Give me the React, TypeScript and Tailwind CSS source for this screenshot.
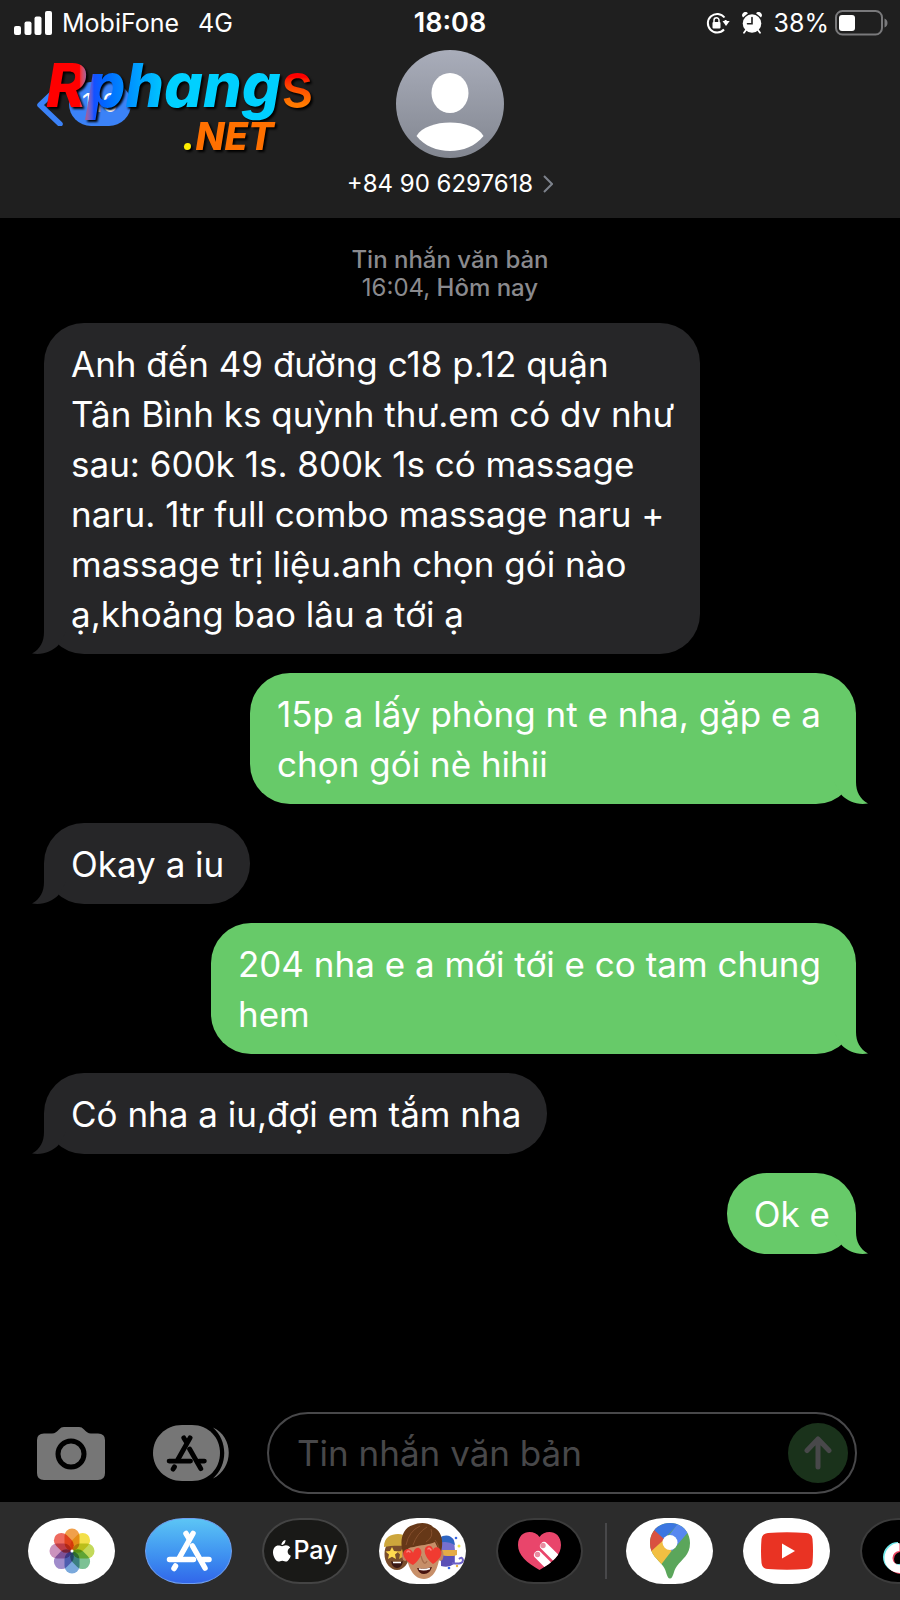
import type { ReactNode } from 'react'

interface Message {
  id: number
  mine: boolean
  lines: string[]
}

const messages: Message[] = [
  {
    id: 1,
    mine: false,
    lines: [
      'Anh đến 49 đường c18 p.12 quận',
      'Tân Bình ks quỳnh thư.em có dv như',
      'sau: 600k 1s. 800k 1s có massage',
      'naru. 1tr full combo massage naru +',
      'massage trị liệu.anh chọn gói nào',
      'ạ,khoảng bao lâu a tới ạ',
    ],
  },
  { id: 2, mine: true, lines: ['15p a lấy phòng nt e nha, gặp e a', 'chọn gói nè hihii'] },
  { id: 3, mine: false, lines: ['Okay a iu'] },
  { id: 4, mine: true, lines: ['204 nha e a mới tới e co tam chung', 'hem'] },
  { id: 5, mine: false, lines: ['Có nha a iu,đợi em tắm nha'] },
  { id: 6, mine: true, lines: ['Ok e'] },
]

const petals = ['#f0a04b', '#f3e04a', '#c3d95a', '#7cc194', '#7aa9dc', '#a08ccb', '#cb93bd', '#ee6a5f']

function StatusBar() {
  return (
    <div className="grid h-[46px] grid-cols-[1fr_auto_1fr] items-center px-[11px] text-[25px] leading-8">
      <div className="flex items-center gap-[10px] pl-[3px]">
        <svg width="38" height="24" viewBox="0 0 38 24" fill="#fff">
          <rect x="0" y="15" width="7" height="9" rx="2" />
          <rect x="10.500" y="10.500" width="7" height="13.500" rx="2" />
          <rect x="20.500" y="5.500" width="7" height="18.500" rx="2" />
          <rect x="31" y="0" width="7" height="24" rx="2" />
        </svg>
        <span>MobiFone</span>
        <span className="pl-[9px]">4G</span>
      </div>
      <span className="text-[27px] font-semibold">18:08</span>
      <div className="flex items-center justify-end">
        <svg width="24" height="22" viewBox="0 0 24 22" fill="none">
          <path d="M18.500 5.500A9.300 9.300 0 1 0 18 17.500" stroke="#fff" strokeWidth="2" />
          <path d="M19.600 8V11" stroke="#fff" strokeWidth="2" />
          <path d="M16.500 9h7.200l-3.700 5z" fill="#fff" />
          <rect x="6.500" y="10" width="8" height="6.500" rx="1" fill="#fff" />
          <path d="M8 10.500V8.300a2.500 2.500 0 0 1 5 0v2.200" stroke="#fff" strokeWidth="1.500" />
        </svg>
        <svg className="ml-3 mr-3" width="20" height="22" viewBox="0 0 20 22">
          <path d="M1 5.500A3 3 0 0 1 6 1.200zM19 5.500A3 3 0 0 0 14 1.200z" fill="#fff" />
          <path d="M4 18l-2 2.800M16 18l2 2.800" stroke="#fff" strokeWidth="1.800" strokeLinecap="round" />
          <circle cx="10" cy="11.500" r="9.300" fill="#fff" />
          <path d="M10 5.500v6.300H5.500" fill="none" stroke="#1f1f1f" strokeWidth="1.600" strokeLinecap="round" />
        </svg>
        <span>38%</span>
        <svg className="ml-[6px]" width="54" height="26" viewBox="0 0 54 26">
          <rect x="1" y="1" width="46" height="23.500" rx="6.500" fill="none" stroke="#79797b" strokeWidth="2" />
          <rect x="4" y="5" width="16" height="16" rx="3" fill="#fff" />
          <path d="M49.500 8.500c4 1.500 4 7.500 0 9z" fill="#79797b" />
        </svg>
      </div>
    </div>
  )
}

function SiteLogo() {
  return (
    <div className="pointer-events-none absolute -top-1 left-[46px] w-[280px] drop-shadow-[2px_2px_1px_#000]">
      <div className="flex items-baseline whitespace-nowrap text-[61px] leading-[78px]">
        <span className="bg-linear-to-r from-[#ff0000] from-14% via-[#1450ff] via-20% to-[#00d0ff] to-52% bg-clip-text pr-1 font-extrabold italic text-transparent">
          Rphang
        </span>
        <span className="-ml-1 bg-linear-to-b from-[#ff0000] from-40% to-[#ff7a00] to-75% bg-clip-text font-medium text-transparent">
          s
        </span>
      </div>
      <div className="-mt-2 pl-[136px] text-[38px] font-extrabold italic leading-10 text-[#ff7000]">
        <span className="text-[#ffee00]">.</span>NET
      </div>
    </div>
  )
}

function Header() {
  return (
    <header className="bg-[#1f1f1f]">
      <StatusBar />
      <div className="grid grid-cols-3 pb-[18px] pt-1">
        <div className="relative">
          <button aria-label="Quay lại" className="ml-9 mt-8 flex items-center gap-[6px]">
            <svg width="27" height="44" viewBox="0 0 27 44" fill="none">
              <path d="M24 4L4 23L24 42" stroke="#3b82f7" strokeWidth="5.500" strokeLinecap="round" strokeLinejoin="round" />
            </svg>
            <span className="flex h-11 w-[62px] items-center justify-center rounded-full bg-[#3b82f7] text-[25px]">110</span>
          </button>
          <SiteLogo />
        </div>
        <button className="flex flex-col items-center">
          <svg width="108" height="108" viewBox="0 0 108 108">
            <defs>
              <linearGradient id="avatar" x1="0" y1="0" x2="0" y2="1">
                <stop offset="0" stopColor="#a9adba" />
                <stop offset="1" stopColor="#828690" />
              </linearGradient>
            </defs>
            <circle cx="54" cy="54" r="54" fill="url(#avatar)" />
            <ellipse cx="54" cy="43" rx="18.500" ry="20" fill="#fff" />
            <path d="M20.500 86C31 68 77 68 87.500 86C72 106 36 106 20.500 86z" fill="#fff" />
          </svg>
          <span className="mt-[10px] flex items-center gap-[10px] whitespace-nowrap text-2xl leading-8">
            +84 90 6297618
            <svg width="10" height="18" viewBox="0 0 10 18" fill="none">
              <path d="M1 1l8 8l-8 8" stroke="#7d828c" strokeWidth="2" />
            </svg>
          </span>
        </button>
      </div>
    </header>
  )
}

function Bubble({ message }: { message: Message }) {
  const { mine, lines } = message
  return (
    <div
      className={`relative rounded-[40px] pb-[15px] pl-[27px] pt-4 text-[35px] leading-[50px] ${
        mine ? 'self-end bg-[#67ca69]' : 'self-start bg-[#262628]'
      } ${mine && lines.length > 1 ? 'pr-[35px]' : 'pr-[26px]'}`}
    >
      {lines.map(line => (
        <p key={line} className="whitespace-nowrap">
          {line}
        </p>
      ))}
      <svg
        className={`absolute bottom-0 ${mine ? '-right-3 -scale-x-100' : '-left-3'}`}
        width="40"
        height="40"
        viewBox="0 0 40 40"
      >
        <path
          d="M12 0V18C12 28 8 35 0 39.500C11 41.500 20 37 26 31.500L34 18V0z"
          fill={mine ? '#67ca69' : '#262628'}
        />
      </svg>
    </div>
  )
}

function StoreGlyph({ color, width }: { color: string; width: number }) {
  return (
    <svg width={width} height={width} viewBox="0 0 46 46" fill="none" stroke={color} strokeWidth="5.500" strokeLinecap="round">
      <path d="M20 5.500L23 10.500" />
      <path d="M27 5.500L13.500 29.500" />
      <path d="M26.500 18L39 40" />
      <path d="M3.500 31.500H27.500M37 31.500H43" />
      <path d="M9.500 38L8 40.500" />
    </svg>
  )
}

function Composer() {
  return (
    <form className="flex items-center pb-2 pl-[37px] pr-[43px]" onSubmit={e => e.preventDefault()}>
      <button type="button" aria-label="Máy ảnh">
        <svg width="68" height="53" viewBox="0 0 68 53">
          <path
            d="M7 6.500H15C18 6.500 20 4.500 22 2.500C23.500 .8 25 0 27 0H42C44 0 45.500 .8 47 2.500C49 4.500 51 6.500 54 6.500H61Q68 6.500 68 13V46Q68 53 61 53H7Q0 53 0 46V13Q0 6.500 7 6.500z"
            fill="#767676"
          />
          <circle cx="34" cy="27" r="13" fill="none" stroke="#000" strokeWidth="5" />
        </svg>
      </button>
      <button type="button" aria-label="Ứng dụng" className="relative ml-12">
        <svg width="76" height="56" viewBox="0 0 76 56">
          <path d="M29 0H39C56 0 67 13 67 28S56 56 39 56H29C12 56 0 43 0 28S12 0 29 0z" fill="#767676" />
          <path d="M60 2.500C81 12 81 43 60 53.500C75 40 75 16 60 2.500z" fill="#767676" />
        </svg>
        <span className="absolute inset-y-0 left-0 flex w-[66px] items-center justify-center">
          <StoreGlyph color="#000" width={41} />
        </span>
      </button>
      <div className="ml-[38px] flex h-[82px] min-w-0 flex-1 items-center rounded-full border-2 border-[#48484a] pl-7 pr-[7px]">
        <input
          aria-label="Tin nhắn văn bản"
          placeholder="Tin nhắn văn bản"
          className="min-w-0 flex-1 bg-transparent text-[35px] leading-[50px] outline-none placeholder:text-[#48484a]"
        />
        <button aria-label="Gửi" className="flex size-[60px] items-center justify-center rounded-full bg-[#1a321b]">
          <svg width="28" height="34" viewBox="0 0 28 34" fill="none">
            <path d="M14 31V3M3 14.500L14 3L25 14.500" stroke="#48484a" strokeWidth="5" strokeLinecap="round" strokeLinejoin="round" />
          </svg>
        </button>
      </div>
    </form>
  )
}

function AppPill({ label, className, children }: { label: string; className: string; children: ReactNode }) {
  return (
    <button
      aria-label={label}
      className={`flex h-[66px] w-[87px] shrink-0 items-center justify-center overflow-hidden rounded-[38px/33px] ${className}`}
    >
      {children}
    </button>
  )
}

function PhotosIcon() {
  return (
    <svg width="46" height="46" viewBox="-23 -23 46 46" className="isolate">
      {petals.map((color, i) => (
        <rect
          key={color}
          x="-7.500"
          y="-22.500"
          width="15"
          height="22"
          rx="7.500"
          fill={color}
          transform={`rotate(${i * 45})`}
          className="mix-blend-multiply"
        />
      ))}
      <circle r="1.500" fill="#fff" />
    </svg>
  )
}

function MemojiIcon() {
  return (
    <svg width="87" height="66" viewBox="0 0 87 66">
      {/* left character */}
      <ellipse cx="18" cy="36" rx="12.500" ry="16" fill="#7a4d2c" />
      <path d="M5 29C5 19 12 16 19 16C27 16 31 22 31 29C22 27 12 28 5 29z" fill="#cda63c" />
      <path d="M12 43Q18 46 24 43Q23 50 18 50Q13 50 12 43z" fill="#3a1815" />
      <path d="M14 44.500H22" stroke="#fff" strokeWidth="1.500" />
      <path d="M13 29l2 4 4.500.5-3.500 3 1 4.500-4-2.300-4 2.300 1-4.500-3.500-3 4.500-.5z" fill="#ffd84f" />
      <path d="M24 29l2 4 4 .5-3 3 1 4.500-4-2.300-4 2.300 1-4.500-3-3 4-.5z" fill="#e0b03c" />
      {/* right character */}
      <path d="M61 20Q70 15 75 22L76 33V46H62z" fill="#7770cf" />
      <path d="M60 20Q70 14 75 23L76 27Q68 22 60 25z" fill="#2f66c2" />
      <path d="M61 32H78V37Q70 40 61 36z" fill="#e5ab45" />
      <path d="M62 38H75V46Q70 50 62 48z" fill="#5b50b6" />
      <path d="M73 45Q84 47 84 42Q83 38 80 41" fill="none" stroke="#6d61c8" strokeWidth="2" />
      <circle cx="77" cy="20" r="1.300" fill="#3867e2" />
      <circle cx="80" cy="28" r="1.500" fill="#efe345" />
      <circle cx="70" cy="50" r="1.300" fill="#3867e2" />
      <circle cx="78" cy="48" r="1.200" fill="#eab13e" />
      {/* front character */}
      <ellipse cx="26" cy="37" rx="3" ry="6" fill="#bf8460" />
      <ellipse cx="61.500" cy="37" rx="3" ry="6" fill="#bf8460" />
      <path d="M27 25C27 16 61 16 61 25C62 46 56 61 45 61C33 61 26 45 27 25z" fill="#c78f69" />
      <path d="M25 37C20 26 22 10 34 7C40 4 50 4 54 9C64 13 65 27 61 37C60 31 58 29 56 24C50 27 41 27 35 29C29 29 27 32 25 37z" fill="#663818" />
      <path d="M27 27Q30 13 41 8M34 27Q38 15 48 9M47 24Q55 19 52 11M56 22Q59 25 60 31" fill="none" stroke="#8a5230" strokeWidth=".9" />
      <path d="M42 38Q45 49 48 43" fill="none" stroke="#a86e4c" strokeWidth="1.300" />
      <path d="M34 47C21 40 23 31 29 31C32 31 34 34 34 35C35 32 37 29 40 30C45 33 42 41 34 47z" fill="#f03b31" />
      <path d="M54 46C44 38 44 29 49 28C52 27 54 30 54 32C55 29 58 28 61 31C65 36 60 42 54 46z" fill="#f03b31" />
      <path d="M28 34Q29 32 31 34M49 31Q50 29 52 32" fill="none" stroke="#ff827d" strokeWidth="1.500" strokeLinecap="round" />
      <path d="M38 50Q45 52 53 49Q51 56 45 56Q40 56 38 50z" fill="#47130f" />
      <path d="M40 51Q45 52.500 51 50.500" fill="none" stroke="#fff" strokeWidth="1.700" />
    </svg>
  )
}

function TouchIcon() {
  return (
    <svg width="45" height="40" viewBox="0 0 45 40">
      <defs>
        <clipPath id="heart">
          <path d="M22.500 6C17-2 1-1 1 14C1 24 10 32 22.500 39C36 31 44 24 44 14C44-1 28-2 22.500 6z" />
        </clipPath>
      </defs>
      <g clipPath="url(#heart)">
        <rect width="45" height="40" fill="#e9456b" />
        <g stroke="#fff" strokeWidth="8" strokeLinecap="round">
          <path d="M27 15L45 33" />
          <path d="M21 24L39 42" />
        </g>
      </g>
      <circle cx="26" cy="14.500" r="2.700" fill="#e98ca1" />
      <circle cx="20.500" cy="23.500" r="2.700" fill="#e98ca1" />
    </svg>
  )
}

function MapsIcon() {
  return (
    <svg width="40" height="56" viewBox="0 0 40 56">
      <defs>
        <clipPath id="pin">
          <path d="M20 0C8 0 0 9 0 20C0 32 8 36 13 43C17 48 16.500 55.500 20 55.500S23 48 27 43C32 36 40 32 40 20C40 9 32 0 20 0z" />
        </clipPath>
      </defs>
      <g clipPath="url(#pin)">
        <rect width="40" height="56" fill="#5ba65b" />
        <path d="M-4 32L14 12L30 17L10 43z" fill="#f2bf42" />
        <path d="M-2 31V2H6L18 13z" fill="#d95140" />
        <path d="M3 6L14 16L31-2H3z" fill="#3b76e1" />
        <path d="M13 20L30-2H40V7L22 28z" fill="#5788f0" />
      </g>
      <circle cx="20" cy="19.500" r="7.500" fill="#fff" />
    </svg>
  )
}

function AppDrawer() {
  return (
    <nav className="flex items-center gap-[30px] overflow-hidden bg-[#2c2c2c] py-4 pl-7">
      <AppPill label="Ảnh" className="bg-white">
        <PhotosIcon />
      </AppPill>
      <AppPill label="App Store" className="border border-[#6f9ff0] bg-linear-to-b from-[#5cc5f5] to-[#3266ea]">
        <StoreGlyph color="#fff" width={46} />
      </AppPill>
      <AppPill label="Apple Pay" className="gap-[2px] border-2 border-[#444444] bg-[#191917] text-[25px] font-medium">
        <svg width="18" height="22" viewBox="0 0 18 22" fill="#fff">
          <path d="M12.500 0C12.600 3 10.500 5 8.500 5C8.300 2.500 10.500.3 12.500 0zM9 6.200C10 6.200 11.300 5.200 13 5.200C14.500 5.200 16.200 6 17.200 7.400C13.500 9.500 14 14.200 17.800 15.700C17 18 15.200 21.500 13.200 21.500C11.800 21.500 11.200 20.700 9.300 20.700S6.800 21.500 5.500 21.500C3 21.500 0 16.500 0 12.200C0 8 2.700 5.500 5.300 5.500C7 5.500 8 6.200 9 6.200z" />
        </svg>
        Pay
      </AppPill>
      <AppPill label="Memoji" className="bg-white">
        <MemojiIcon />
      </AppPill>
      <AppPill label="Digital Touch" className="border-2 border-[#3c3c3c] bg-black">
        <TouchIcon />
      </AppPill>
      <div className="-ml-2 -mr-[11px] h-[56px] w-[2px] shrink-0 bg-[#48484a]" />
      <AppPill label="Google Maps" className="bg-white">
        <MapsIcon />
      </AppPill>
      <AppPill label="YouTube" className="bg-white">
        <svg width="52" height="38" viewBox="0 0 52 38">
          <path d="M7 1Q26-.5 45 1Q51 1.500 51.500 7Q52.500 19 51.500 31Q51 36.500 45 37Q26 38.500 7 37Q1 36.500.5 31Q-.5 19 .5 7Q1 1.500 7 1z" fill="#e93323" />
          <path d="M21 11.500L34 19L21 26.500z" fill="#fff" />
        </svg>
      </AppPill>
      <AppPill label="TikTok" className="border-2 border-[#3c3c3c] bg-black">
        <svg width="44" height="52" viewBox="0 2 44 52" fill="none" strokeWidth="8">
          <path d="M16 23A11 11 0 1 0 27 34V3C28 10 33 14 39 14" stroke="#6feaec" />
          <path d="M19 25A11 11 0 1 0 30 36V5C31 12 36 16 42 16" stroke="#e9445f" />
          <path d="M17.500 24A11 11 0 1 0 28.500 35V4C29.500 11 34.500 15 40.500 15" stroke="#fff" />
        </svg>
      </AppPill>
    </nav>
  )
}

export default function App() {
  return (
    <div className="flex min-h-screen flex-col overflow-hidden bg-black font-['Inter','Noto_Sans',sans-serif] text-white">
      <Header />
      <main className="flex flex-1 flex-col px-11 pt-7">
        <div className="mb-[21px] text-center text-2xl font-medium leading-7 text-[#8a8a8e]">
          <p>Tin nhắn văn bản</p>
          <p>
            <span className="font-normal">16:04,</span> Hôm nay
          </p>
        </div>
        <div className="flex flex-col gap-[19px]">
          {messages.map(message => (
            <Bubble key={message.id} message={message} />
          ))}
        </div>
      </main>
      <Composer />
      <AppDrawer />
    </div>
  )
}
